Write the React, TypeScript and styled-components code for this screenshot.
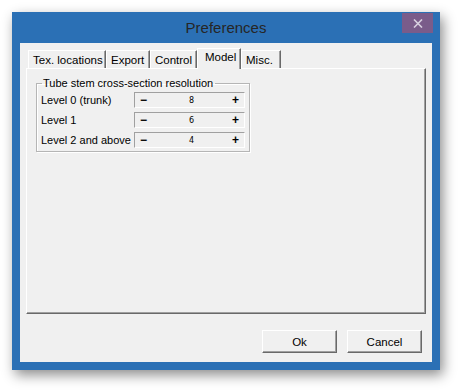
import React from "react";
import styled, { createGlobalStyle } from "styled-components";

const Global = createGlobalStyle`
  html, body { margin: 0; padding: 0; background: #ffffff; }
  body { font-family: "Liberation Sans", Arial, sans-serif; font-size: 11.5px; color: #000; }
`;

const Page = styled.div`
  width: 460px;
  height: 391px;
  padding: 12px 0 0 12px;
  box-sizing: border-box;
`;

const Window = styled.div`
  width: 428px;
  height: 358px;
  box-sizing: border-box;
  background: #2b70b5;
  padding: 0 8px 8px;
  display: flex;
  flex-direction: column;
  box-shadow: 3px 5px 12px rgba(0, 0, 0, 0.45);
`;

const TitleBar = styled.div`
  height: 31px;
  flex: none;
  display: flex;
  align-items: center;
  position: relative;
`;

const Title = styled.div`
  flex: 1;
  text-align: center;
  font-size: 15px;
  color: #262626;
`;

const CloseBtn = styled.div`
  position: absolute;
  right: -1px;
  top: 1px;
  width: 31px;
  height: 20px;
  background: #7a5c8a;
  display: flex;
  align-items: center;
  justify-content: center;
`;

const Client = styled.div`
  flex: 1;
  background: #f0f0f0;
  display: flex;
  flex-direction: column;
  padding: 5px 6px 9px;
`;

const TabRow = styled.div`
  display: flex;
  align-items: flex-end;
  height: 20px;
  padding-left: 2px;
  position: relative;
  z-index: 1;
`;

const Tab = styled.div<{ $active?: boolean; $w: number }>`
  width: ${(p) => p.$w}px;
  height: ${(p) => (p.$active ? 21 : 18)}px;
  box-sizing: border-box;
  padding: ${(p) => (p.$active ? 2 : 1)}px 0 0 ${(p) => (p.$active ? 7 : 4)}px;
  margin-bottom: ${(p) => (p.$active ? -1 : 0)}px;
  border-top: 1px solid #ffffff;
  border-left: 1px solid #ffffff;
  border-right: 1px solid #696969;
  box-shadow: inset -1px 0 0 #a0a0a0;
  background: #f0f0f0;
  display: flex;
  align-items: ${(p) => (p.$active ? "flex-start" : "center")};
  white-space: nowrap;
  position: relative;
  z-index: ${(p) => (p.$active ? 2 : 1)};
`;

const Panel = styled.div`
  width: 400px;
  height: 246px;
  box-sizing: border-box;
  border-top: 1px solid #ffffff;
  border-left: 1px solid #ffffff;
  border-right: 1px solid #696969;
  border-bottom: 1px solid #696969;
  box-shadow: inset -1px -1px 0 #a0a0a0;
  padding: 8px 0 0 9px;
`;

const Group = styled.fieldset`
  width: 214px;
  box-sizing: border-box;
  margin: 0;
  padding: 3px 4px 3px 4px;
  border: 1px solid #b5b5b5;
  box-shadow: 1px 1px 0 #ffffff, inset 1px 1px 0 #ffffff;
  display: flex;
  flex-direction: column;
  gap: 4px;
  font-size: 11px;
`;

const Legend = styled.legend`
  padding: 0 2px 0 1px;
  margin-left: 1px;
`;

const Row = styled.div`
  display: flex;
  align-items: center;
  height: 16px;
`;

const Label = styled.div`
  width: 93px;
  white-space: nowrap;
`;

const Spin = styled.div`
  width: 111px;
  height: 16px;
  box-sizing: border-box;
  border-top: 1px solid #a0a0a0;
  border-left: 1px solid #a0a0a0;
  border-right: 1px solid #ffffff;
  border-bottom: 1px solid #ffffff;
  display: flex;
  align-items: center;
  justify-content: space-between;
  padding: 0 5px 0 5px;
  font-size: 12px;
  font-weight: bold;
`;

const Value = styled.span`
  font-size: 8px;
  font-weight: normal;
  font-family: "DejaVu Sans", sans-serif;
  padding-left: 4px;
`;

const Footer = styled.div`
  margin-top: auto;
  display: flex;
  justify-content: flex-end;
  gap: 10px;
  padding-right: 4px;
`;

const Button = styled.div`
  width: 75px;
  height: 23px;
  box-sizing: border-box;
  border-top: 1px solid #ffffff;
  border-left: 1px solid #ffffff;
  border-right: 1px solid #696969;
  border-bottom: 1px solid #696969;
  box-shadow: inset -1px -1px 0 #a0a0a0;
  display: flex;
  align-items: center;
  justify-content: center;
`;

const tabs = [
  { name: "Tex. locations", w: 78 },
  { name: "Export", w: 44 },
  { name: "Control", w: 47 },
  { name: "Model", w: 44 },
  { name: "Misc.", w: 40 },
];
const levels = [
  { label: "Level 0 (trunk)", value: 8 },
  { label: "Level 1", value: 6 },
  { label: "Level 2 and above", value: 4 },
];

const App: React.FC = () => {
  return (
    <Page>
      <Global />
      <Window>
        <TitleBar>
          <Title>Preferences</Title>
          <CloseBtn>
            <svg width="10" height="9" viewBox="0 0 10 9">
              <path d="M1 0.5 L9 8.5 M9 0.5 L1 8.5" stroke="#d8d0e0" strokeWidth="1.6" />
            </svg>
          </CloseBtn>
        </TitleBar>
        <Client>
          <TabRow>
            {tabs.map((t) => (
              <Tab key={t.name} $w={t.w} $active={t.name === "Model"}>{t.name}</Tab>
            ))}
          </TabRow>
          <Panel>
            <Group>
              <Legend>Tube stem cross-section resolution</Legend>
              {levels.map((l) => (
                <Row key={l.label}>
                  <Label>{l.label}</Label>
                  <Spin>
                    <span>−</span>
                    <Value>{l.value}</Value>
                    <span>+</span>
                  </Spin>
                </Row>
              ))}
            </Group>
          </Panel>
          <Footer>
            <Button>Ok</Button>
            <Button>Cancel</Button>
          </Footer>
        </Client>
      </Window>
    </Page>
  );
};

export default App;
